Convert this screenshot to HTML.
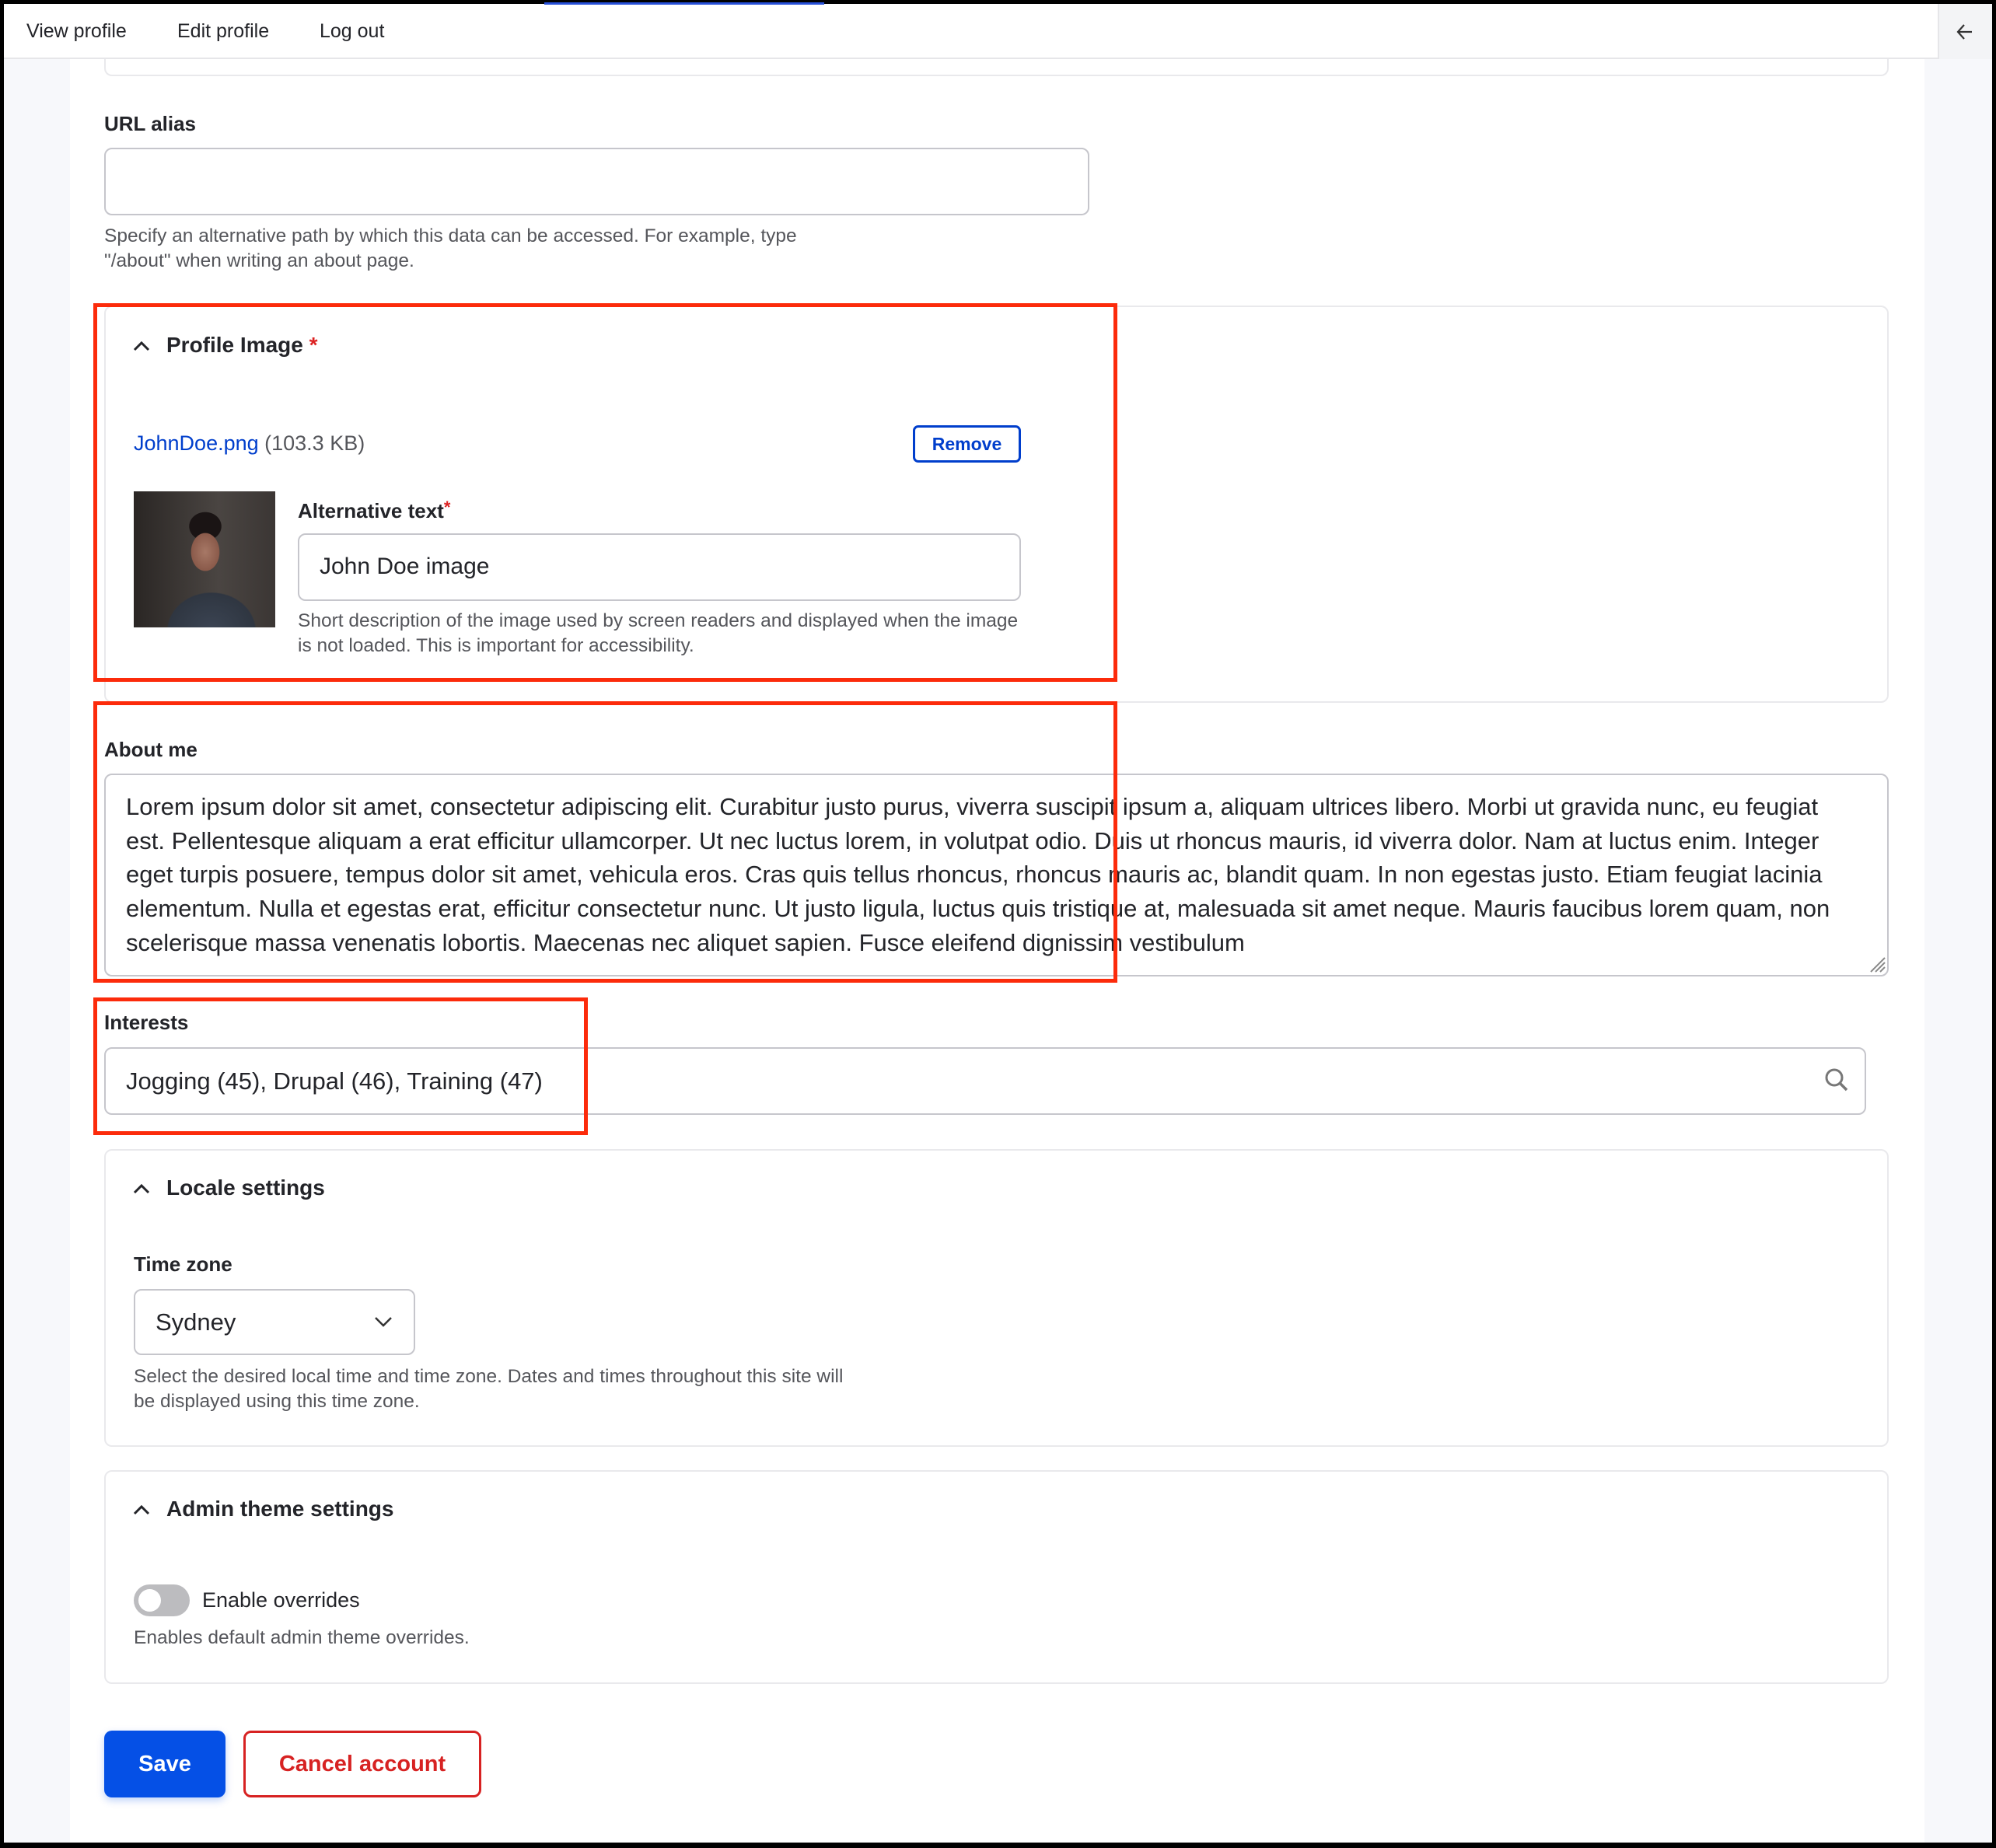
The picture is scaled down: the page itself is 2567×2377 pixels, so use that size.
<!DOCTYPE html>
<html><head><meta charset="utf-8"><style>
*{box-sizing:border-box;margin:0;padding:0}
body{width:2567px;height:2377px;background:#000;font-family:"Liberation Sans",Arial,sans-serif;color:#222330;position:relative;overflow:hidden}
.a{position:absolute}
#page{left:5px;top:5px;width:2557px;height:2365px;background:#f7f8fb}
#main{left:90px;top:76px;width:2385px;height:2294px;background:#fff}
#bar{left:5px;top:5px;width:2557px;height:71px;background:#fff;border-bottom:2px solid #e6e6e9}
.nav{top:26px;font-size:25px;color:#232429}
.fs{border:2px solid #e9e9ec;border-radius:10px;background:#fff}
.lbl{font-weight:bold;font-size:26px;color:#232429}
.inp{border:2px solid #c6c6cc;border-radius:10px;background:#fff}
.desc{font-size:24.5px;color:#55565b;line-height:32px;white-space:nowrap}
.red{border:5px solid #fc2b0b}
.ttl{font-weight:bold;font-size:28px;color:#232429}
.chev{width:22px;height:22px}
</style></head><body>
<div class="a" id="page"></div>
<div class="a" id="main"></div>
<div class="a fs" style="left:134px;top:40px;width:2295px;height:58px;border-top:none;border-radius:0 0 10px 10px"></div>
<div class="a" id="bar"></div>
<div class="a" style="left:700px;top:3px;width:360px;height:3px;background:#2750d8"></div>
<div class="a nav" style="left:34px">View profile</div>
<div class="a nav" style="left:228px">Edit profile</div>
<div class="a nav" style="left:411px">Log out</div>
<div class="a" style="left:2492px;top:5px;width:70px;height:71px;background:#f3f4f6;border-left:2px solid #e6e6e9"></div>
<svg class="a" style="left:2514px;top:28px" width="26" height="26" viewBox="0 0 26 26"><path d="M22 13H4M12 4L4 13l8 9" fill="none" stroke="#333" stroke-width="2.2"/></svg>

<div class="a lbl" style="left:134px;top:144px">URL alias</div>
<div class="a inp" style="left:134px;top:190px;width:1267px;height:87px"></div>
<div class="a desc" style="left:134px;top:288px">Specify an alternative path by which this data can be accessed. For example, type<br>"/about" when writing an about page.</div>

<div class="a fs" style="left:134px;top:393px;width:2295px;height:511px"></div>
<svg class="a chev" style="left:171px;top:434px" viewBox="0 0 22 22"><path d="M2 16L11 7l9 9" fill="none" stroke="#232429" stroke-width="3"/></svg>
<div class="a ttl" style="left:214px;top:428px">Profile Image <span style="color:#dc2323">*</span></div>
<div class="a" style="left:172px;top:555px;font-size:27px;color:#55565b"><span style="color:#003ecc">JohnDoe.png</span> (103.3 KB)</div>
<div class="a" style="left:1174px;top:547px;width:139px;height:48px;border:3px solid #003ecc;border-radius:7px;color:#003ecc;font-weight:bold;font-size:23px;text-align:center;line-height:42px">Remove</div>
<div class="a" style="left:172px;top:632px;width:182px;height:175px;background:radial-gradient(ellipse 30px 40px at 92px 78px,#a77866 0,#8a5a4a 60%,transparent 62%),radial-gradient(ellipse 80px 70px at 100px 180px,#3c4554 0,#2f3641 70%,transparent 72%),radial-gradient(ellipse 34px 30px at 92px 45px,#1a1414 0,#1a1414 60%,transparent 62%),linear-gradient(90deg,#2a2624,#4a4542 60%,#3b3634)"></div>
<div class="a lbl" style="left:383px;top:640px">Alternative text<span style="color:#dc2323;vertical-align:6px;font-size:22px">*</span></div>
<div class="a inp" style="left:383px;top:686px;width:930px;height:87px"></div>
<div class="a" style="left:411px;top:712px;font-size:30px;color:#232429">John Doe image</div>
<div class="a desc" style="left:383px;top:783px">Short description of the image used by screen readers and displayed when the image<br>is not loaded. This is important for accessibility.</div>

<div class="a lbl" style="left:134px;top:949px">About me</div>
<div class="a inp" style="left:134px;top:995px;width:2295px;height:261px"></div>
<div class="a" style="left:162px;top:1016px;font-size:31px;line-height:43.7px;color:#232429;white-space:nowrap">Lorem ipsum dolor sit amet, consectetur adipiscing elit. Curabitur justo purus, viverra suscipit ipsum a, aliquam ultrices libero. Morbi ut gravida nunc, eu feugiat<br>est. Pellentesque aliquam a erat efficitur ullamcorper. Ut nec luctus lorem, in volutpat odio. Duis ut rhoncus mauris, id viverra dolor. Nam at luctus enim. Integer<br>eget turpis posuere, tempus dolor sit amet, vehicula eros. Cras quis tellus rhoncus, rhoncus mauris ac, blandit quam. In non egestas justo. Etiam feugiat lacinia<br>elementum. Nulla et egestas erat, efficitur consectetur nunc. Ut justo ligula, luctus quis tristique at, malesuada sit amet neque. Mauris faucibus lorem quam, non<br>scelerisque massa venenatis lobortis. Maecenas nec aliquet sapien. Fusce eleifend dignissim vestibulum</div>
<svg class="a" style="left:2402px;top:1228px" width="24" height="24" viewBox="0 0 24 24"><path d="M22 4L4 22M22 10L10 22M22 16L16 22" stroke="#888" stroke-width="2"/></svg>

<div class="a lbl" style="left:134px;top:1300px">Interests</div>
<div class="a inp" style="left:134px;top:1347px;width:2266px;height:87px"></div>
<div class="a" style="left:162px;top:1373px;font-size:31px;color:#232429">Jogging (45), Drupal (46), Training (47)</div>
<svg class="a" style="left:2346px;top:1373px" width="32" height="32" viewBox="0 0 32 32"><circle cx="13" cy="13" r="10" fill="none" stroke="#777" stroke-width="3"/><path d="M20 20l9 9" stroke="#777" stroke-width="3.5"/></svg>

<div class="a fs" style="left:134px;top:1478px;width:2295px;height:383px"></div>
<svg class="a chev" style="left:171px;top:1518px" viewBox="0 0 22 22"><path d="M2 16L11 7l9 9" fill="none" stroke="#232429" stroke-width="3"/></svg>
<div class="a ttl" style="left:214px;top:1512px">Locale settings</div>
<div class="a lbl" style="left:172px;top:1611px">Time zone</div>
<div class="a inp" style="left:172px;top:1658px;width:362px;height:85px"></div>
<div class="a" style="left:200px;top:1683px;font-size:31px;color:#232429">Sydney</div>
<svg class="a" style="left:480px;top:1690px" width="26" height="20" viewBox="0 0 26 20"><path d="M3 5l10 10L23 5" fill="none" stroke="#333" stroke-width="2.5"/></svg>
<div class="a desc" style="left:172px;top:1755px">Select the desired local time and time zone. Dates and times throughout this site will<br>be displayed using this time zone.</div>

<div class="a fs" style="left:134px;top:1891px;width:2295px;height:275px"></div>
<svg class="a chev" style="left:171px;top:1931px" viewBox="0 0 22 22"><path d="M2 16L11 7l9 9" fill="none" stroke="#232429" stroke-width="3"/></svg>
<div class="a ttl" style="left:214px;top:1925px">Admin theme settings</div>
<div class="a" style="left:172px;top:2038px;width:72px;height:41px;border-radius:21px;background:#bcbcbf"></div>
<div class="a" style="left:178px;top:2044px;width:29px;height:29px;border-radius:50%;background:#fff"></div>
<div class="a" style="left:260px;top:2043px;font-size:27px;color:#232429">Enable overrides</div>
<div class="a desc" style="left:172px;top:2091px">Enables default admin theme overrides.</div>

<div class="a" style="left:134px;top:2226px;width:156px;height:86px;background:#0550e6;border-radius:10px;color:#fff;font-weight:bold;font-size:29px;text-align:center;line-height:86px;box-shadow:0 4px 10px rgba(5,80,230,.25)">Save</div>
<div class="a" style="left:313px;top:2226px;width:306px;height:86px;border:3px solid #d72222;border-radius:10px;color:#d72222;font-weight:bold;font-size:29px;text-align:center;line-height:80px">Cancel account</div>

<div class="a red" style="left:120px;top:390px;width:1317px;height:487px"></div>
<div class="a red" style="left:120px;top:902px;width:1317px;height:362px"></div>
<div class="a red" style="left:120px;top:1283px;width:636px;height:177px"></div>
</body></html>
